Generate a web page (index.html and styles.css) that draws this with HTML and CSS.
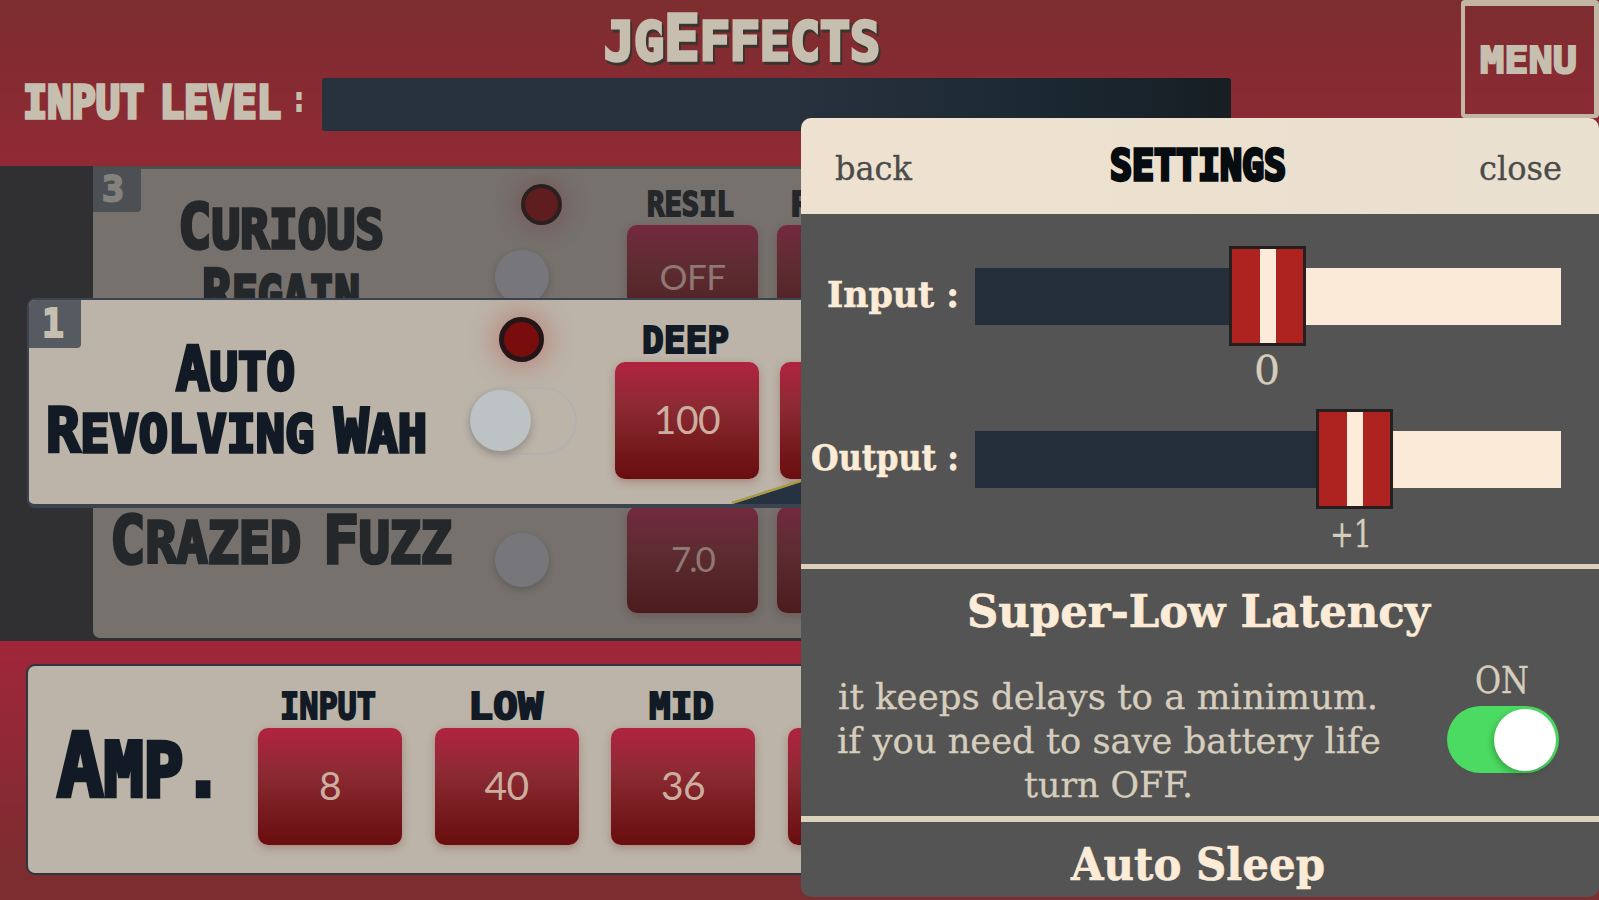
FILE: index.html
```html
<!DOCTYPE html>
<html lang="en">
<head>
<meta charset="utf-8">
<title>JGEffects</title>
<link rel="stylesheet" href="styles.css">
</head>
<body>
<div class="app">
  <header class="top">
    <div class="top-main">
      <svg class="brand" viewBox="604 0 280 78" width="280" height="78"><text class="display heavy" x="604" y="60" font-size="53" textLength="276" lengthAdjust="spacingAndGlyphs">JG<tspan font-size="63">E</tspan>FFECTS</text></svg>
      <div class="meter-row">
        <svg class="meter-label" viewBox="0 78 322 52" width="322" height="52">
          <text class="display heavy" x="23" y="118" font-size="45" textLength="258" lengthAdjust="spacingAndGlyphs">INPUT LEVEL</text>
          <text class="display" x="292" y="111" font-size="33" textLength="14" lengthAdjust="spacingAndGlyphs">:</text>
        </svg>
        <div class="meter"></div>
      </div>
    </div>
    <div class="menu"><svg viewBox="1465 6 129 109" width="129" height="109"><text class="display" x="1480" y="73" font-size="38" textLength="97" lengthAdjust="spacingAndGlyphs">MENU</text></svg></div>
  </header>

  <main class="rack">
    <section class="card dim upper">
      <span class="badge"><svg width="48" height="43"><text class="display" x="9" y="32" font-size="35" textLength="22" lengthAdjust="spacingAndGlyphs">3</text></svg></span>
      <svg class="name" viewBox="93 169 372 129" width="372" height="129">
        <text class="display heavy" x="178" y="248" textLength="206" lengthAdjust="spacingAndGlyphs" font-size="54"><tspan font-size="63">C</tspan>URIOUS</text>
        <text class="display heavy" x="202" y="314" textLength="158" lengthAdjust="spacingAndGlyphs" font-size="54"><tspan font-size="63">R</tspan>EGAIN</text>
      </svg>
      <div class="power"><i class="led"></i><i class="switch"></i></div>
      <div class="params">
        <div class="param"><svg class="label" width="131" height="56"><text class="display" x="20" y="47" font-size="34" textLength="87" lengthAdjust="spacingAndGlyphs">RESIL</text></svg><b class="button">OFF</b></div>
        <div class="param"><svg class="label" width="131" height="56"><text class="display" x="14" y="47" font-size="34">R</text></svg><b class="button"></b></div>
      </div>
    </section>

    <section class="card active">
      <span class="badge"><svg width="52" height="48"><text class="display" x="13" y="37" font-size="39" textLength="22" lengthAdjust="spacingAndGlyphs">1</text></svg></span>
      <svg class="name" viewBox="29 300 426 205" width="426" height="205">
        <text class="display heavy" x="176" y="390" textLength="119" lengthAdjust="spacingAndGlyphs" font-size="52"><tspan font-size="61">A</tspan>UTO</text>
        <text class="display heavy" x="46" y="452" textLength="381" lengthAdjust="spacingAndGlyphs" font-size="52"><tspan font-size="61">R</tspan>EVOLVING <tspan font-size="61">W</tspan>AH</text>
      </svg>
      <div class="power"><i class="led"></i><i class="switch"></i></div>
      <div class="params">
        <div class="param"><svg class="label" width="144" height="62"><text class="display" x="27" y="53" font-size="37" textLength="87" lengthAdjust="spacingAndGlyphs">DEEP</text></svg><b class="button">100</b></div>
        <div class="param"><svg class="label" width="144" height="62"></svg><b class="button"></b></div>
      </div>
      <svg class="wedge" width="90" height="30"><path d="M0 30L90 1V30Z" fill="#26323f"/><path d="M0 29L90 0" stroke="#a79a45" stroke-width="2.5"/></svg>
    </section>

    <section class="card dim lower">
      <svg class="name" viewBox="93 509 372 129" width="372" height="129">
        <text class="display heavy" x="110" y="564" textLength="342" lengthAdjust="spacingAndGlyphs" font-size="57"><tspan font-size="65">C</tspan>RAZED <tspan font-size="65">F</tspan>UZZ</text>
      </svg>
      <div class="power"><i class="switch"></i></div>
      <div class="params">
        <div class="param"><b class="button">7.0</b></div>
        <div class="param"><b class="button"></b></div>
      </div>
    </section>
  </main>

  <footer class="bottom">
    <section class="card amp">
      <svg class="name" viewBox="28 666 230 207" width="230" height="207">
        <text class="display big" x="57" y="796" textLength="166" lengthAdjust="spacingAndGlyphs" font-size="75"><tspan font-size="88">A</tspan>MP.</text>
      </svg>
      <div class="params">
        <div class="param"><svg class="label" width="144" height="62"><text class="display" x="22" y="53" font-size="37" textLength="96" lengthAdjust="spacingAndGlyphs">INPUT</text></svg><b class="button">8</b></div>
        <div class="param"><svg class="label" width="144" height="62"><text class="display" x="33" y="53" font-size="37" textLength="75" lengthAdjust="spacingAndGlyphs">LOW</text></svg><b class="button">40</b></div>
        <div class="param"><svg class="label" width="144" height="62"><text class="display" x="38" y="53" font-size="37" textLength="65" lengthAdjust="spacingAndGlyphs">MID</text></svg><b class="button">36</b></div>
        <div class="param"><svg class="label" width="144" height="62"></svg><b class="button"></b></div>
      </div>
    </section>
  </footer>
</div>

<aside class="panel">
  <div class="panel-head">
    <svg viewBox="801 118 798 95" width="798" height="95">
      <text class="slab" x="835" y="180" font-size="33" textLength="77" lengthAdjust="spacingAndGlyphs">back</text>
      <text class="display heavy" x="1110" y="180" font-size="42" textLength="176" lengthAdjust="spacingAndGlyphs">SETTINGS</text>
      <text class="slab" x="1479" y="180" font-size="33" textLength="83" lengthAdjust="spacingAndGlyphs">close</text>
    </svg>
  </div>
  <div class="levels">
    <div class="level">
      <svg class="level-label" viewBox="801 246 174 100" width="174" height="100"><text class="slab strong" x="827" y="307" font-size="35" textLength="132" lengthAdjust="spacingAndGlyphs">Input :</text></svg>
      <div class="track"><div class="fill" style="width:49.9%"></div><i class="thumb" style="left:49.9%"></i></div>
      <svg class="value" style="left:436px" width="60" height="40"><text class="slab" x="17" y="32" font-size="40" textLength="26" lengthAdjust="spacingAndGlyphs">0</text></svg>
    </div>
    <div class="level">
      <svg class="level-label" viewBox="801 408 174 100" width="174" height="100"><text class="slab strong" x="811" y="469" font-size="35" textLength="148" lengthAdjust="spacingAndGlyphs">Output :</text></svg>
      <div class="track"><div class="fill" style="width:64.7%"></div><i class="thumb" style="left:64.7%"></i></div>
      <svg class="value" style="left:520px" width="60" height="40"><text class="slab" x="9" y="32" font-size="38" textLength="42" lengthAdjust="spacingAndGlyphs">+1</text></svg>
    </div>
  </div>
  <div class="latency">
    <svg class="heading" viewBox="801 569 798 80" width="798" height="80"><text class="slab strong" x="967" y="627" font-size="44" textLength="463" lengthAdjust="spacingAndGlyphs">Super-Low Latency</text></svg>
    <div class="latency-body">
      <svg viewBox="801 649 646 167" width="646" height="167">
        <text class="slab" x="838" y="709" font-size="36" textLength="540" lengthAdjust="spacingAndGlyphs">it keeps delays to a minimum.</text>
        <text class="slab" x="837" y="753" font-size="36" textLength="544" lengthAdjust="spacingAndGlyphs">if you need to save battery life</text>
        <text class="slab" x="1024" y="797" font-size="36" textLength="169" lengthAdjust="spacingAndGlyphs">turn OFF.</text>
      </svg>
      <div class="toggle-col">
        <svg width="112" height="57"><text class="slab" x="28" y="44" font-size="37" textLength="54" lengthAdjust="spacingAndGlyphs">ON</text></svg>
        <i class="toggle"></i>
      </div>
    </div>
  </div>
  <div class="sleep">
    <svg viewBox="801 822 798 74" width="798" height="74"><text class="slab strong" x="1071" y="880" font-size="44" textLength="254" lengthAdjust="spacingAndGlyphs">Auto Sleep</text></svg>
  </div>
</aside>
</body>
</html>
```
FILE: styles.css
```css
* { box-sizing: border-box; }
body {
  margin: 0;
  width: 1599px;
  height: 900px;
  overflow: hidden;
  position: relative;
  background: #7e2c2f;
  font-family: Lato, "Open Sans", "Liberation Sans", sans-serif;
}
svg { display: block; flex: none; overflow: visible; }
.display {
  font-family: "DejaVu Sans Mono", "Liberation Mono", monospace;
  font-weight: bold;
  word-spacing: -10px;
  fill: #121b25;
  stroke: #121b25;
  stroke-width: 2;
}
.heavy { stroke-width: 3.4; }
.big { stroke-width: 4.5; }
.slab { font-family: "DejaVu Serif", "Liberation Serif", serif; fill: #d6cdbd; stroke: #d6cdbd; stroke-width: .3; }
.strong { font-weight: bold; fill: #fbebd7; stroke: #fbebd7; stroke-width: .6; }

.app { display: flex; flex-direction: column; width: 1599px; height: 900px; overflow: hidden; }
.top { display: flex; flex: none; height: 166px; background: linear-gradient(#7d2d2f, #852b31 45%, #912a34); }
.top .display { fill: #c6beae; stroke: #c6beae; }
.top-main { width: 1461px; }
.brand { margin-left: 604px; filter: drop-shadow(2px 3px 0 #3b332f); }
.meter-row { display: flex; }
.meter { width: 909px; height: 53px; border-radius: 3px; background: linear-gradient(90deg, #27323e 50%, #1b2730 82%, #171e24); }
.menu { width: 138px; height: 118px; border: solid #c4b6a5; border-width: 6px 5px 4px 4px; border-radius: 4px; }

.rack { flex: none; height: 475px; padding-top: 3px; background: #302f32; }
.card { display: flex; position: relative; background: #bcb4a8; overflow: hidden; }
.dim { margin-left: 93px; width: 900px; background: #76716d; }
.upper { height: 129px; box-shadow: 0 -3px #504e4d; }
.active { margin-left: 27px; width: 900px; height: 210px; border: 2px solid #3a434f; border-bottom-width: 4px; border-radius: 8px; }
.lower { height: 130px; border-radius: 0 0 0 7px; }
.badge { position: absolute; left: 0; top: 0; background: #565b61; border-radius: 0 0 4px 0; }
.badge .display { fill: #c6beb0; stroke: #c6beb0; }
.dim .display { fill: #25282b; stroke: #25282b; }
.dim .badge { background: #4c4f54; }
.dim .badge .display { fill: #85817c; stroke: #85817c; }

.power { flex: none; display: flex; flex-direction: column; }
.active .power { width: 160px; padding: 17px 0 0 13px; }
.led { display: block; flex: none; width: 45px; height: 45px; margin-left: 31px; border: 5px solid #231518; border-radius: 50%; background: #790d0e; box-shadow: 0 0 28px 3px rgba(180, 50, 45, .42); }
.switch { display: block; flex: none; width: 109px; height: 68px; margin-top: 25px; border: 2px solid #b1b1af; border-radius: 34px; }
.switch::before { content: ""; display: block; width: 61px; height: 61px; margin-top: 1px; border-radius: 50%; background: #bdc2c5; box-shadow: 0 4px 8px rgba(60, 50, 40, .3); }
.dim .power { width: 162px; padding-left: 36px; }
.dim .led { width: 41px; height: 41px; margin: 15px 0 0 20px; border-color: #29201f; border-width: 4px; background: #601d20; box-shadow: 0 0 25px 2px rgba(120, 30, 35, .35); }
.dim .switch { width: 97px; height: 60px; margin-top: 22px; margin-left: -8px; border-color: transparent; }
.dim .switch::before { width: 54px; height: 54px; background: #77777b; box-shadow: 0 3px 7px rgba(40, 35, 30, .25); }

.params { display: flex; flex: none; gap: 21px; }
.param { width: 144px; flex: none; }
.button {
  display: flex;
  align-items: center;
  justify-content: center;
  height: 117px;
  padding-bottom: 4px;
  border-radius: 10px;
  background: linear-gradient(#b12340, #8c2a33 38%, #791c20 68%, #6a0d0f);
  box-shadow: 0 3px 9px rgba(125, 50, 45, .35);
  color: #cbaea0;
  font-weight: 400;
  font-size: 39px;
  letter-spacing: -.5px;
}
.dim .params { gap: 19px; }
.dim .param { width: 131px; }
.dim .button { height: 106px; font-size: 35px; color: #8f7773; background: linear-gradient(#732a3d, #5c2c31 42%, #4c1b1e); box-shadow: 0 3px 8px rgba(80, 35, 35, .3); }
.lower .button { margin-top: -1px; letter-spacing: -2px; }
.wedge { position: absolute; right: 103px; bottom: 0; }

.bottom { flex: 1; padding: 23px 0 0 26px; background: linear-gradient(#a02639, #7d2c30 88%); }
.amp { width: 1000px; height: 211px; border: 2px solid #2d3640; border-radius: 9px; }
.amp .params { gap: 32.5px; }

.panel { position: absolute; left: 801px; top: 118px; width: 798px; height: 779px; border-radius: 10px; background: #545454; overflow: hidden; }
.panel-head { height: 96px; background: linear-gradient(90deg, #eee1cf, #eae0cf); }
.panel-head .slab { fill: #4b4b4b; stroke: #4b4b4b; }
.panel-head .display { fill: #070c10; stroke: #070c10; }
.levels { height: 350px; padding-top: 32px; }
.level { display: flex; position: relative; height: 163px; }
.track { position: relative; width: 586px; height: 57px; margin-top: 22px; background: #faead7; }
.fill { height: 57px; background: #252f3b; }
.thumb { position: absolute; top: -22px; width: 77px; height: 100px; margin-left: -38px; border: 3px solid #25201f; background: linear-gradient(90deg, #ae231f 28px, #fcecd9 28px, #fcecd9 44px, #ae231f 44px); }
.value { position: absolute; top: 106px; }
.latency { height: 259px; border-top: 5px solid #dccfbd; }
.latency-body { display: flex; }
.toggle { display: block; width: 112px; height: 67px; padding: 3px 3px 3px 47px; border-radius: 34px; background: #4bdb62; }
.toggle::before { content: ""; display: block; width: 62px; height: 62px; border-radius: 50%; background: #fff; box-shadow: -2px 3px 6px rgba(0, 60, 0, .3); }
.sleep { border-top: 6px solid #dad2bb; margin-top: -7px; }
```
